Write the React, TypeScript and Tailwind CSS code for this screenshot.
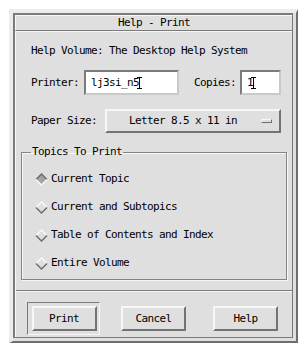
import React from 'react';

const font = "font-['DejaVu_Sans_Mono','Liberation_Mono',monospace] text-[11px] tracking-[-0.62px] leading-[14px] text-black";

const topics = [
  { label: 'Current Topic', checked: true },
  { label: 'Current and Subtopics', checked: false },
  { label: 'Table of Contents and Index', checked: false },
  { label: 'Entire Volume', checked: false },
];

function Diamond({ checked }: { checked: boolean }) {
  const top = checked ? '#6f6f6f' : '#f8f8f8';
  const bottom = checked ? '#f8f8f8' : '#6f6f6f';
  return (
    <svg width="13" height="13" viewBox="0 0 13 13" className="shrink-0">
      <polygon points="6.5,1 12,6.5 6.5,12 1,6.5" fill={checked ? '#a3a3a3' : '#dfdfdf'} />
      <polyline points="1,6.5 6.5,1 12,6.5" fill="none" stroke={top} strokeWidth="1.5" />
      <polyline points="1,6.5 6.5,12 12,6.5" fill="none" stroke={bottom} strokeWidth="1.5" />
    </svg>
  );
}

function IBeam() {
  return (
    <svg width="5" height="12" viewBox="0 0 5 12" className="ml-[-2px] inline-block align-middle">
      <path d="M0 0.5H5M0 11.5H5M2.5 0.5V11.5" stroke="#000" strokeWidth="1" fill="none" />
    </svg>
  );
}

function Button({ label }: { label: string }) {
  return (
    <div className="w-[65px] h-[25px] flex items-center justify-center border-t-2 border-l-2 border-t-[#f7f7f7] border-l-[#f7f7f7] border-r-2 border-b-2 border-r-[#737373] border-b-[#737373] bg-[#dfdfdf]">
      <span className={font}>{label}</span>
    </div>
  );
}

export default function App() {
  return (
    <div className="w-[307px] h-[354px] bg-white pt-[9px] pl-[9px]">
      {/* window frame */}
      <div className="w-[289px] h-[334px] bg-[#dfdfdf] border-t-4 border-l-4 border-t-[#ececec] border-l-[#ececec] border-r-2 border-b-2 border-r-[#6e6e6e] border-b-[#6e6e6e] pr-[3px] pb-[3px]">
        <div className="h-full flex flex-col border-t-2 border-l-2 border-r border-b border-[#7b7b7b]">
          {/* title bar */}
          <div className="h-[16px] flex items-center justify-center border-t border-l border-t-[#f7f7f7] border-l-[#f7f7f7] border-b border-b-[#7b7b7b]">
            <span className={font}>Help - Print</span>
          </div>

          {/* body */}
          <div className="flex-1 flex flex-col border-t border-l border-[#f7f7f7]">
            <div className={`${font} mt-[12px] pl-[15px]`}>Help Volume: The Desktop Help System</div>

            <div className="mt-[12px] h-[25px] flex items-center pl-[15px]">
              <span className={font}>Printer:</span>
              <div className="ml-[5px] w-[95px] h-[25px] bg-white border-t-2 border-l-2 border-t-[#7b7b7b] border-l-[#7b7b7b] border-r-2 border-b-2 border-r-[#c9c9c9] border-b-[#c9c9c9] flex items-center pl-[5px]">
                <span className={font}>lj3si_n5</span>
                <IBeam />
              </div>
              <span className={`${font} ml-[15px]`}>Copies:</span>
              <div className="ml-[4px] w-[41px] h-[25px] bg-white border-t-2 border-l-2 border-t-[#7b7b7b] border-l-[#7b7b7b] border-r-2 border-b-2 border-r-[#c9c9c9] border-b-[#c9c9c9] flex items-center pl-[5px]">
                <span className={font}>1</span>
                <IBeam />
              </div>
            </div>

            <div className="mt-[14px] h-[24px] flex items-center pl-[15px]">
              <span className={font}>Paper Size:</span>
              <div className="ml-[8px] w-[176px] h-[24px] flex items-center border-t-2 border-l-2 border-t-[#f7f7f7] border-l-[#f7f7f7] border-r-2 border-b-2 border-r-[#737373] border-b-[#737373] pl-[22px] pr-[7px]">
                <span className={`${font} flex-1`}>Letter 8.5 x 11 in</span>
                <div className="w-[11px] h-[4px] border-t border-l border-[#f7f7f7] border-r border-b border-r-[#6e6e6e] border-b-[#6e6e6e] bg-[#dfdfdf]" />
              </div>
            </div>

            {/* topics group */}
            <fieldset className="mt-[12px] mx-[5px] border border-[#858585] shadow-[inset_1px_1px_0_#f7f7f7,1px_1px_0_#f7f7f7] pb-[9px]">
              <legend className={`${font} ml-[9px] px-[1px]`}>Topics To Print</legend>
              <div className="flex flex-col gap-[14px] mt-[13px] pl-[13px]">
                {topics.map((t) => (
                  <div key={t.label} className="h-[14px] flex items-center gap-[3px]">
                    <Diamond checked={t.checked} />
                    <span className={font}>{t.label}</span>
                  </div>
                ))}
              </div>
            </fieldset>

            {/* separator */}
            <div className="mt-[10px] h-[2px] border-t border-t-[#7b7b7b] border-b border-b-[#f7f7f7]" />

            {/* buttons */}
            <div className="mt-[10px] flex items-center pl-[11px]">
              <div className="w-[73px] h-[33px] flex items-center justify-center border-t border-l border-t-[#7b7b7b] border-l-[#7b7b7b] border-r border-b border-r-[#f7f7f7] border-b-[#f7f7f7]">
                <div className="w-[64px]"><Button label="Print" /></div>
              </div>
              <div className="ml-[21px]"><Button label="Cancel" /></div>
              <div className="ml-[27px]"><Button label="Help" /></div>
            </div>
          </div>
        </div>
      </div>
    </div>
  );
}
